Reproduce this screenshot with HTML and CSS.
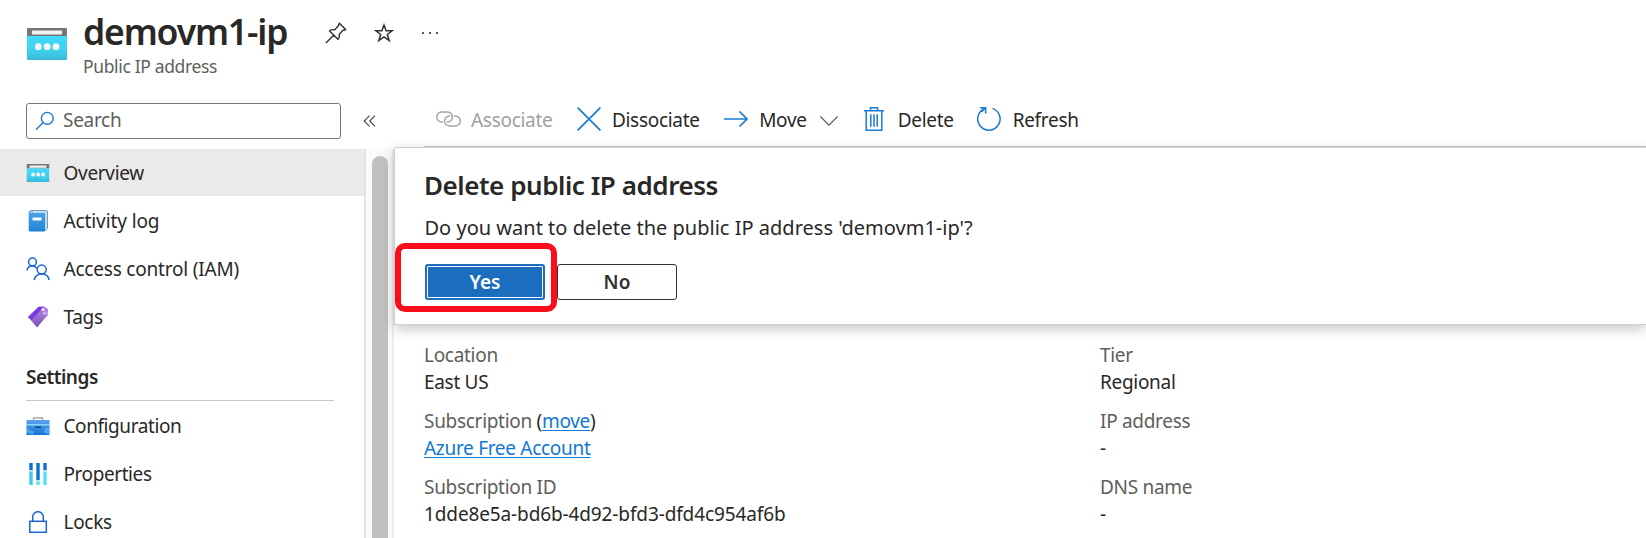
FILE: index.html
```html
<!DOCTYPE html>
<html lang="en">
<head>
<meta charset="utf-8">
<title>demovm1-ip</title>
<link rel="stylesheet" href="styles.css">
</head>
<body>
<svg class="defs" width="0" height="0">
  <defs>
    <linearGradient id="cyan" x1="0" y1="0" x2="0" y2="1"><stop offset="0" stop-color="#43daf8"/><stop offset=".6" stop-color="#40d0ef"/><stop offset="1" stop-color="#37b8d8"/></linearGradient>
    <linearGradient id="blue" x1="0" y1="0" x2="0" y2="1"><stop offset="0" stop-color="#5ea0ef"/><stop offset="1" stop-color="#0f78d4"/></linearGradient>
    <linearGradient id="book" x1="0" y1="0" x2="0" y2="1"><stop offset="0" stop-color="#4fa3e8"/><stop offset="1" stop-color="#2284d8"/></linearGradient>
    <linearGradient id="violet" x1="0" y1="0" x2="0" y2="1"><stop offset="0" stop-color="#b48ae2"/><stop offset="1" stop-color="#7b4fb5"/></linearGradient>
    <symbol id="ip" viewBox="0 0 40 32">
      <path d="M1 0h38a1 1 0 0 1 1 1v7H0V1a1 1 0 0 1 1-1z" fill="#767676"/>
      <rect x="5" y="2.5" width="30" height="4" rx=".5" fill="#f2f2f2"/>
      <path d="M0 8h40v23a1 1 0 0 1-1 1H1a1 1 0 0 1-1-1z" fill="url(#cyan)"/>
      <circle cx="11.3" cy="18.7" r="3.4" fill="#f4f6f7"/><circle cx="20.2" cy="18.7" r="3.4" fill="#f4f6f7"/><circle cx="29" cy="18.7" r="3.4" fill="#f4f6f7"/>
    </symbol>
  </defs>
</svg>
<header class="header">
  <svg class="resource-icon" width="40" height="32"><use href="#ip"/></svg>
  <div class="heading">
    <h1 class="title">demovm1-ip</h1>
    <p class="subtitle">Public IP address</p>
  </div>
  <div class="header-actions">
    <svg width="22" height="22" viewBox="0 0 22 22" fill="none" stroke="#323130" stroke-width="1.4" stroke-linejoin="round"><path d="M14.4 1.2l6.3 6.3-1.600.8-.8-.2-4 4.200c.3 1.900 0 3.600-1.100 5.100L4.500 8.900c1.500-1.100 3.200-1.500 5.200-1.100l4-4.200-.2-.8zM8.600 13.200l-7.600 7.800"/></svg>
    <svg width="20" height="20" viewBox="0 0 20 20" fill="none" stroke="#323130" stroke-width="1.5"><path d="M10 2l2.100 5.700h6.200l-5 3.800 1.900 6.200L10 14l-5.200 3.700 1.900-6.200-5-3.800h6.200z"/></svg>
    <svg width="18" height="4" viewBox="0 0 18 4" fill="#323130"><circle cx="2" cy="2" r="1.1"/><circle cx="9" cy="2" r="1.1"/><circle cx="16" cy="2" r="1.1"/></svg>
  </div>
</header>
<div class="shell">
  <nav class="sidebar">
    <div class="search-row">
      <div class="search">
        <svg width="20" height="20" viewBox="0 0 20 20" fill="none" stroke="#1a7bd4" stroke-width="1.4"><circle cx="12.3" cy="7.3" r="5.9"/><path d="M8 11.500L1 18.700"/></svg>
        <span>Search</span>
      </div>
      <svg class="collapse" width="14" height="12" viewBox="0 0 14 12" fill="none" stroke="#444" stroke-width="1.1"><path d="M6.500.7L1.200 6l5.300 5.300M12 .7L6.700 6l5.300 5.300"/></svg>
    </div>
    <div class="menu">
      <div class="menu-items">
        <a class="item active"><svg width="22" height="18"><use href="#ip"/></svg><span>Overview</span></a>
        <a class="item"><svg width="22" height="22" viewBox="0 0 22 22"><path d="M4 .5h15.500q1 0 1 1v17L18 21z" fill="#c3dbf0" stroke="#4a8cc0" stroke-width=".8"/><path d="M3 3h15v17.500q0 1-1 1H3q-1.300 0-1.300-1.300V2.500q0-1.700 2-2L4 1q-.8 1 0 2z" fill="url(#book)"/><rect x="5.500" y="7.500" width="9" height="3" fill="#fff"/></svg><span class="log">Activity log</span></a>
        <a class="item"><svg width="24" height="24" viewBox="0 0 24 24" fill="none" stroke="#1863d8" stroke-width="1.5"><circle cx="6.500" cy="5" r="3.900"/><circle cx="15.700" cy="12.600" r="4.500"/><path d="M1 13.500c.3-2.600 2.400-4.500 5.200-4.500 2 0 3.600.8 4.600 2.200M8.300 23c.6-3.500 3.600-5.900 7.400-5.900s6.800 2.400 7.400 5.900"/></svg><span class="iam">Access control (IAM)</span></a>
        <a class="item"><svg width="22" height="22" viewBox="0 0 22 22"><path d="M2.500 12.500L13.500 1l5.500.2 2 2-.5 6L10 21.500z" fill="url(#violet)"/><path d="M.6 11.200L11.500.8l6-.3L4.500 14z" fill="#773adc"/><circle cx="15.800" cy="3.400" r="1.500" fill="#f3ecfb"/><circle cx="17.800" cy="7" r="1.600" fill="#f3ecfb"/><circle cx="18" cy="7" r=".7" fill="#773adc"/></svg><span>Tags</span></a>
        <h2 class="section">Settings</h2>
        <a class="item"><svg width="23" height="18" viewBox="0 0 23 18"><path d="M7 4V.8h9V4" fill="none" stroke="#999" stroke-width="1.200"/><path d="M0 3h23v15H0z" fill="url(#blue)"/><path d="M0 7h23v1.600H0z" fill="#7fd7fa"/><path d="M8.500 9.300h6v1.700h-6z" fill="#0a4f94"/><path d="M.5 12l7 2.500-1 3-6-2zM22.500 10.500v6.500c-3 0-5-1-5-3s2-3.500 5-3.500z" fill="#5b9ee9"/></svg><span class="config">Configuration</span></a>
        <a class="item"><svg width="22" height="22" viewBox="0 0 22 22"><path d="M2.300 0h3.400v7H2.300zM9.300 0h3.400v17H9.300zM16.300 0h3.400v7h-3.400z" fill="#0f6fce"/><path d="M2.300 7h3.400v1.500H2.300zM9.300 17h3.400v1.500H9.300zM16.300 7h3.400v1.500h-3.400z" fill="#c9dcea"/><path d="M2.300 8.500h3.400V22H2.300z" fill="#3ccbe4"/><path d="M9.300 18.500h3.400V22H9.300zM16.300 8.500h3.400V22h-3.400z" fill="#55e2f8"/></svg><span class="props">Properties</span></a>
        <a class="item"><svg width="22" height="22" viewBox="0 0 22 22" fill="none" stroke="#1863d8" stroke-width="1.500"><rect x="2.800" y="10.300" width="16.500" height="11"/><path d="M5.700 10.300V6a5.300 5.300 0 0 1 10.600 0v4.300"/></svg><span>Locks</span></a>
      </div>
      <div class="scroll"><div class="thumb"></div></div>
    </div>
  </nav>
  <main class="main">
    <div class="toolbar">
      <span class="cmd associate"><svg width="25" height="16" viewBox="0 0 25 16" fill="none" stroke="#a6a6a6" stroke-width="1.500"><path d="M7 11H5.700a5 5 0 0 1 0-10h5.800a5 5 0 0 1 0 10h-.8M18 5h1.300a5 5 0 0 1 0 10h-5.800a5 5 0 0 1 0-10h.8"/></svg><b>Associate</b></span>
      <span class="cmd dissociate"><svg width="24" height="24" viewBox="0 0 24 24" fill="none" stroke="#1a7bd4" stroke-width="1.700"><path d="M.6.600l22.800 22.800M23.400.6L.6 23.400"/></svg><b>Dissociate</b></span>
      <span class="cmd move"><svg width="24" height="16" viewBox="0 0 24 16" fill="none" stroke="#1a7bd4" stroke-width="1.600"><path d="M0 8h23M15.500.5L23 8l-7.500 7.500"/></svg><b>Move</b><svg class="chev" width="18" height="10" viewBox="0 0 18 10" fill="none" stroke="#555" stroke-width="1.100"><path d="M.4.5L9 9.100 17.600.5"/></svg></span>
      <span class="cmd delete"><svg width="20" height="24" viewBox="0 0 20 24" fill="none" stroke="#1a7bd4" stroke-width="1.500"><path d="M0 3.700h20M6.500 3.500V.8h7v2.700M2.200 4v19.200h15.600V4M6.800 7.200v12.600M10 7.200v12.600M13.200 7.200v12.600"/></svg><b>Delete</b></span>
      <span class="cmd"><svg width="24" height="24" viewBox="0 0 24 24" fill="none" stroke="#1a7bd4" stroke-width="1.500"><path d="M15.500 1.400A11.200 11.200 0 1 1 8 1.500M3 .8h5.700v5.700M8.500 1L4.500 5"/></svg><b>Refresh</b></span>
    </div>
    <section class="dialog">
      <h2 class="dialog-title">Delete public IP address</h2>
      <p class="dialog-text">Do you want to delete the public IP address 'demovm1-ip'?</p>
      <div class="buttons"><button class="btn primary">Yes</button><button class="btn">No</button></div>
      <div class="highlight"></div>
    </section>
    <div class="details">
      <dl>
        <dt>Location</dt><dd>East US</dd>
        <dt>Subscription <span class="paren">(<a class="link">move</a>)</span></dt><dd><a class="link">Azure Free Account</a></dd>
        <dt>Subscription ID</dt><dd class="guid">1dde8e5a-bd6b-4d92-bfd3-dfd4c954af6b</dd>
      </dl>
      <dl>
        <dt>Tier</dt><dd>Regional</dd>
        <dt>IP address</dt><dd>-</dd>
        <dt>DNS name</dt><dd>-</dd>
      </dl>
    </div>
  </main>
</div>
</body>
</html>
```
FILE: styles.css
```css
* { box-sizing: border-box; }
body { margin: 0; width: 1646px; height: 538px; overflow: hidden; background: #fff; color: #292827; font: 19px/24px "Segoe UI", "Noto Sans", "Open Sans", sans-serif; letter-spacing: -0.3px; display: flex; flex-direction: column; }
h1, h2, p, dl, dd { margin: 0; }
svg { display: block; flex: none; }
.defs { position: absolute; }
.header { height: 95px; padding-left: 27px; display: flex; align-items: flex-start; flex: none; }
.resource-icon { margin-top: 28px; }
.heading { margin-left: 16px; width: 226px; padding-top: 9px; white-space: nowrap; }
.title { font-size: 35.5px; line-height: 45px; font-weight: 600; letter-spacing: -1.15px; }
.subtitle { font-size: 17.5px; line-height: 24px; letter-spacing: -0.35px; color: #605e5c; }
.header-actions { display: flex; align-items: center; height: 22px; margin: 22px 0 0 16px; gap: 27px; }
.shell { display: flex; flex: 1; min-height: 0; }
.sidebar { width: 394px; flex: none; display: flex; flex-direction: column; }
.search-row { display: flex; align-items: center; height: 54px; padding: 0 0 2px 26px; flex: none; }
.search { width: 315px; height: 36px; margin-top: -1px; border: 1px solid #777; border-radius: 3px; display: flex; align-items: center; gap: 8px; padding-left: 8px; color: #605e5c; }
.search span { padding-bottom: 1px; }
.collapse { margin-left: 22px; }
.menu { display: flex; flex: 1; min-height: 0; overflow: hidden; }
.menu-items { width: 366px; border-right: 2px solid #e3e3e3; overflow: hidden; }
.item { height: 48px; display: flex; align-items: center; padding-left: 26px; white-space: nowrap; }
.item svg { width: 24px; }
.item span { margin-left: 13.5px; }
.item .log { letter-spacing: -0.1px; }
.item .iam { letter-spacing: -0.2px; }
.item .config, .item .props { letter-spacing: -0.42px; }
.item.active { height: 47px; margin-bottom: 1px; background: #ebeae9; }
.section { height: 60px; margin: 0 30px 1px 26px; padding-top: 24px; border-bottom: 1px solid #c8c8c8; font-size: 19px; line-height: 24px; font-weight: 600; letter-spacing: -0.5px; }
.scroll { flex: 1; background: #fafafa; padding: 7px 0 0 6px; border-right: 2px solid #ededed; }
.thumb { width: 16px; height: 100%; border-radius: 8px 8px 0 0; background: #c1c1c1; }
.main { flex: 1; min-width: 0; display: flex; flex-direction: column; }
.toolbar { height: 52px; margin-left: 30px; padding: 0 0 2px 12px; border-bottom: 1px solid #c8c8c8; display: flex; align-items: center; flex: none; }
.cmd { display: flex; align-items: center; color: #292827; }
.cmd b { font-weight: 400; margin-left: 12px; padding-top: 1px; }
.cmd > svg:first-child { margin-top: -1px; }
.associate { color: #a19f9d; margin-right: 25px; }
.associate b { margin-left: 10px; }
.dissociate { margin-right: 24px; }
.dissociate b { margin-left: 10.5px; }
.move { margin-right: 26px; }
.move b { margin-left: 11.5px; }
.delete { margin-right: 23px; }
.delete b { margin-left: 14px; }
.chev { margin: 3px 0 0 13px; }
.dialog { position: relative; height: 178px; padding: 20px 0 0 30px; background: #fff; border: 1px solid #cfcfcf; border-right: 0; box-shadow: 0 4px 12px rgba(0,0,0,.22); flex: none; }
.dialog-title { font-size: 26px; line-height: 34px; font-weight: 600; letter-spacing: -0.45px; margin-left: -1px; }
.dialog-text { font-size: 20px; line-height: 24px; letter-spacing: 0.01px; margin: 14px 0 0 -0.5px; }
.buttons { display: flex; gap: 12px; margin-top: 24px; }
.btn { width: 120px; height: 36px; border: 1px solid #323130; border-radius: 3px; background: #fff; color: #323130; font: 600 19px/24px "Segoe UI", "Noto Sans", sans-serif; padding: 0 0 1px; }
.primary { background: #1b6ebd; border: 2px solid #1b6ebd; color: #fff; box-shadow: inset 0 0 0 1px #fff; }
.highlight { position: absolute; left: 0; top: 95px; width: 162px; height: 69px; border: 6px solid #fc0d1b; border-radius: 10px; }
.details { display: flex; padding: 17px 0 0 30px; }
.details dl:first-child { width: 676px; flex: none; }
.details dl:last-child { flex: 1; }
dt { height: 27px; line-height: 27px; color: #605e5c; }
dd { height: 27px; line-height: 27px; margin-bottom: 12px; }
.guid { letter-spacing: -0.12px; }
.paren { color: #292827; }
.link { color: #1078d4; text-decoration: underline; text-underline-offset: 2px; }
```
